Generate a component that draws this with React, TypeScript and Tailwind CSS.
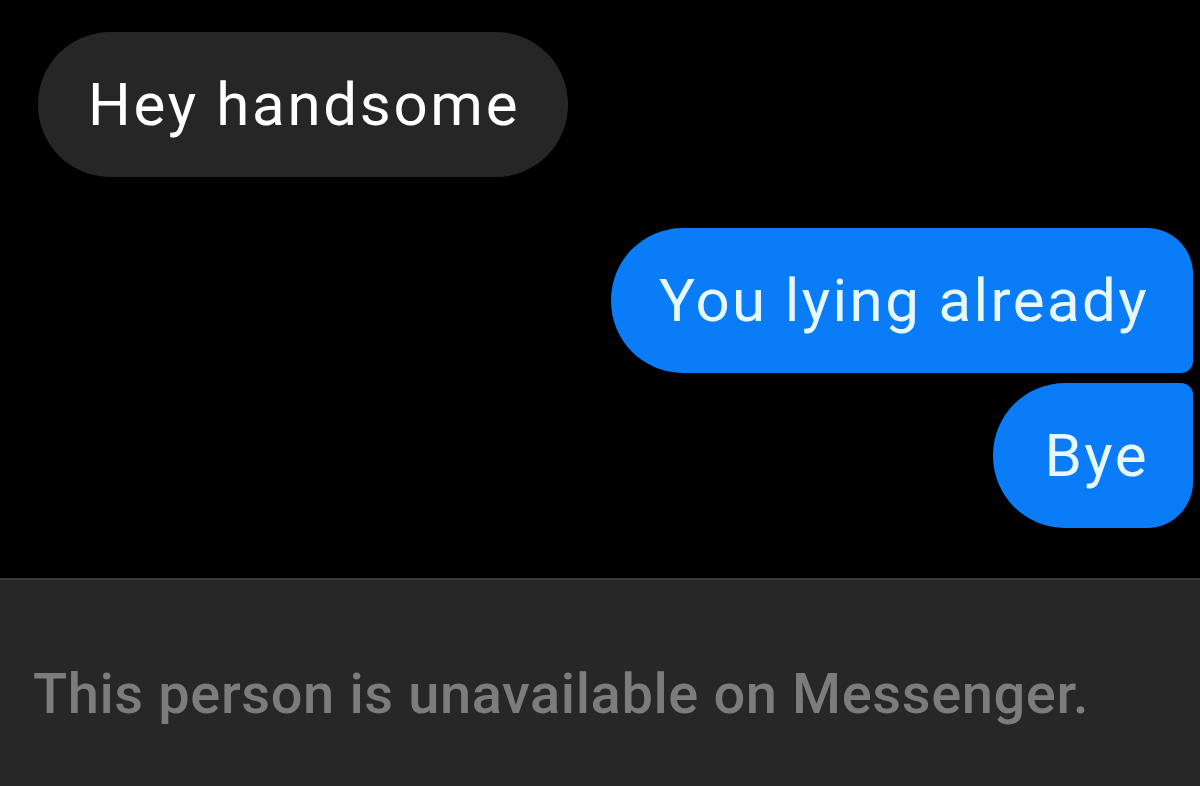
export default function App() {
  return (
    <div className="flex h-[786px] w-[1200px] flex-col overflow-hidden bg-black font-['Roboto',sans-serif]">
      {/* messages */}
      <div className="flex flex-1 flex-col pt-[32px]">
        <div className="ml-[38px] flex h-[145px] w-fit items-center rounded-[72px] bg-[#262626] pl-[50px] pr-[48px] text-[60px] tracking-[2.7px] text-white">
          Hey handsome
        </div>

        <div className="mt-[51px] flex flex-col items-end gap-[10px] pr-[7px]">
          <div className="flex h-[145px] items-center rounded-l-[72px] rounded-tr-[46px] rounded-br-[12px] bg-[#0a7cf7] pl-[48px] pr-[44px] text-[60px] tracking-[2.4px] text-[#e6f7ff]">
            You lying already
          </div>
          <div className="flex h-[145px] items-center rounded-l-[72px] rounded-tr-[12px] rounded-br-[46px] bg-[#0a7cf7] pl-[52px] pr-[44px] text-[60px] tracking-[2.4px] text-[#e6f7ff]">
            Bye
          </div>
        </div>
      </div>

      {/* footer */}
      <div className="flex h-[208px] items-center border-t-2 border-[#3a3a3a] bg-[#272727] pl-[33px] pt-[22px] text-[56px] font-medium tracking-[0.6px] text-[#7c7c7c]">
        This person is unavailable on Messenger.
      </div>
    </div>
  );
}
